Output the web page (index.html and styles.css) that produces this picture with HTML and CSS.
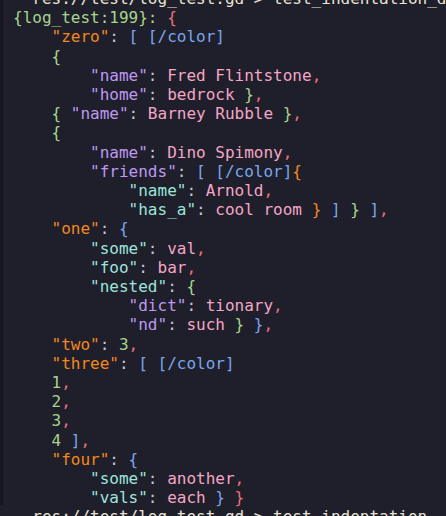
FILE: index.html
```html
<!DOCTYPE html>
<html>
<head>
<meta charset="utf-8">
<link rel="stylesheet" href="styles.css">
</head>
<body>
<div class="term">
<pre class="out"><span class="path">  res://test/log_test.gd &gt; test_indentation_d</span>
<span class="g">{log_test:199}: </span><span class="r">{</span>
    <span class="o">"zero"</span><span class="p">: </span><span class="b">[ [/color]</span>
    <span class="g">{</span>
        <span class="v">"name"</span><span class="p">: </span><span class="s">Fred Flintstone</span><span class="r">,</span>
        <span class="v">"home"</span><span class="p">: </span><span class="s">bedrock </span><span class="g">}</span><span class="r">,</span>
    <span class="g">{ </span><span class="v">"name"</span><span class="p">: </span><span class="s">Barney Rubble </span><span class="g">}</span><span class="r">,</span>
    <span class="g">{</span>
        <span class="v">"name"</span><span class="p">: </span><span class="s">Dino Spimony</span><span class="r">,</span>
        <span class="v">"friends"</span><span class="p">: </span><span class="b">[ [/color]</span><span class="o">{</span>
            <span class="t">"name"</span><span class="p">: </span><span class="s">Arnold</span><span class="r">,</span>
            <span class="t">"has_a"</span><span class="p">: </span><span class="s">cool room </span><span class="o">}</span> <span class="b">]</span> <span class="g">}</span> <span class="b">]</span><span class="r">,</span>
    <span class="o">"one"</span><span class="p">: </span><span class="b">{</span>
        <span class="t">"some"</span><span class="p">: </span><span class="s">val</span><span class="r">,</span>
        <span class="t">"foo"</span><span class="p">: </span><span class="s">bar</span><span class="r">,</span>
        <span class="t">"nested"</span><span class="p">: </span><span class="g">{</span>
            <span class="v">"dict"</span><span class="p">: </span><span class="s">tionary</span><span class="r">,</span>
            <span class="v">"nd"</span><span class="p">: </span><span class="s">such </span><span class="g">}</span> <span class="b">}</span><span class="r">,</span>
    <span class="o">"two"</span><span class="p">: </span><span class="g">3</span><span class="r">,</span>
    <span class="o">"three"</span><span class="p">: </span><span class="b">[ [/color]</span>
    <span class="g">1</span><span class="r">,</span>
    <span class="g">2</span><span class="r">,</span>
    <span class="g">3</span><span class="r">,</span>
    <span class="g">4 </span><span class="b">]</span><span class="r">,</span>
    <span class="o">"four"</span><span class="p">: </span><span class="b">{</span>
        <span class="t">"some"</span><span class="p">: </span><span class="s">another</span><span class="r">,</span>
        <span class="t">"vals"</span><span class="p">: </span><span class="s">each </span><span class="b">}</span> <span class="r">}</span>
<span class="path">  res://test/log_test.gd &gt; test_indentation_</span></pre>
</div>
</body>
</html>
```
FILE: styles.css
```css
html, body {
  margin: 0;
  padding: 0;
  background: #1e1f2a;
  height: 100%;
  overflow: hidden;
}
.term {
  height: 100%;
  border-left: 3px solid #16171e;
  padding-left: 10px;
  background: #1e1f2a;
}
.out {
  margin: -11px 0 0 0;
  font-family: "DejaVu Sans Mono", monospace;
  font-size: 16px;
  line-height: 19.2px;
  color: #c3c6d1;
  white-space: pre;
}
.path { color: #e9e4d2; }
.g { color: #a8d48c; }
.r { color: #ec6f7a; }
.o { color: #f5871f; }
.b { color: #7aa6ec; }
.p { color: #c3c6d1; }
.v { color: #bf98f2; }
.s { color: #f4a6c6; }
.t { color: #9de4dc; }
```
